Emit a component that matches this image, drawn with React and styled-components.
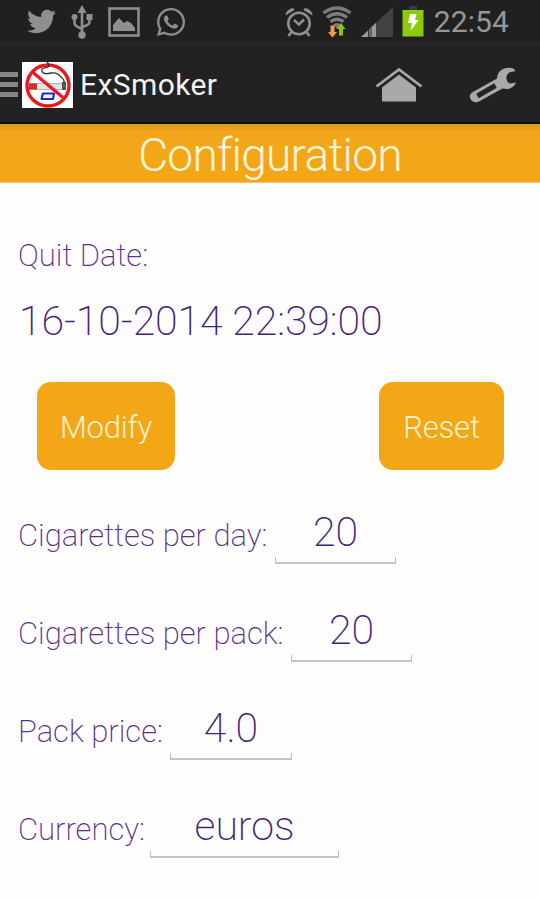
import React, { useState } from "react";
import styled, { createGlobalStyle } from "styled-components";
import { FaTwitter, FaWhatsapp } from "react-icons/fa";

const GlobalStyle = createGlobalStyle`
  * {
    box-sizing: border-box;
  }
  body {
    margin: 0;
    background: #fdfdfd;
    font-family: Roboto, "Liberation Sans", sans-serif;
  }
`;

const Container = styled.div`
  width: 540px;
  height: 900px;
  overflow: hidden;
  display: flex;
  flex-direction: column;
  background: #fdfdfd;
`;

const StatusBar = styled.div`
  height: 44px;
  flex: none;
  display: flex;
  justify-content: space-between;
  align-items: center;
  padding: 0 31px 0 27px;
  background: #202020;
  border-bottom: 1px solid #2b2d2d;
  color: #8f8f8f;
`;

const StatusGroup = styled.div`
  display: flex;
  align-items: center;
  gap: ${(props) => props.$gap}px;
  svg {
    display: block;
    flex: none;
  }
`;

const Clock = styled.span`
  font-size: 30px;
  line-height: 43px;
  letter-spacing: 0.1px;
  margin-left: 1px;
  color: #979797;
`;

const ActionBar = styled.header`
  height: 80px;
  flex: none;
  display: flex;
  align-items: center;
  padding: 3px 23px 0 0;
  background: #222222;
  border-bottom: 2px solid #110b12;
  svg {
    display: block;
    flex: none;
  }
`;

const MenuButton = styled.button`
  width: 22px;
  height: 50px;
  padding: 0;
  border: none;
  background: none;
  display: flex;
  flex-direction: column;
  justify-content: center;
  gap: 5px;
`;

const MenuLine = styled.span`
  width: 18px;
  height: 5px;
  background: #868686;
`;

const AppName = styled.h1`
  flex: 1;
  margin: 0 0 0 7px;
  font-size: 30px;
  line-height: 40px;
  font-weight: 400;
  letter-spacing: 0.4px;
  color: #f3f3f3;
`;

const Actions = styled.div`
  display: flex;
  align-items: center;
  gap: 46px;
`;

const Title = styled.h2`
  height: 59px;
  flex: none;
  margin: 0;
  padding-top: 3px;
  text-align: center;
  font-size: 46px;
  line-height: 56px;
  font-weight: 300;
  letter-spacing: -0.7px;
  color: #fff6dc;
  background: linear-gradient(#dc9a1c, #f2a61a 8px, #f3a716);
  border-bottom: 1px solid #f6c468;
`;

const Form = styled.form`
  display: flex;
  flex-direction: column;
  padding: 53px 18px 0;
`;

const Label = styled.label`
  font-size: 31px;
  line-height: 40px;
  font-weight: 200;
  color: #5a2f8a;
  white-space: nowrap;
`;

const QuitDate = styled.div`
  margin-top: 20px;
  padding-left: 1px;
  font-size: 41px;
  line-height: 50px;
  font-weight: 200;
  letter-spacing: -0.1px;
  color: #461f7a;
  white-space: nowrap;
`;

const Buttons = styled.div`
  display: flex;
  justify-content: space-between;
  margin-top: 36px;
  padding: 0 18px 0 19px;
`;

const Button = styled.button`
  width: ${(props) => props.$width}px;
  height: 88px;
  padding: 3px 0 0;
  border: none;
  border-radius: 14px;
  background: #f3a716;
  color: #fff0d2;
  font-family: inherit;
  font-size: 31px;
  font-weight: 300;
  letter-spacing: -0.2px;
`;

const Fields = styled.div`
  display: flex;
  flex-direction: column;
  gap: 38px;
  margin-top: 34px;
`;

const Row = styled.div`
  display: flex;
  height: 60px;
`;

const FieldLabel = styled(Label)`
  width: ${(props) => props.$width}px;
  padding-top: 12px;
`;

const InputWrap = styled.div`
  width: ${(props) => props.$width}px;
  height: 60px;
  background:
    linear-gradient(#bcbcbc, #bcbcbc) left bottom / 1px 7px no-repeat,
    linear-gradient(#bcbcbc, #bcbcbc) right bottom / 1px 7px no-repeat,
    linear-gradient(#c4c4c4, #c4c4c4) left bottom / 100% 2px no-repeat;
`;

const Input = styled.input`
  width: 100%;
  height: 56px;
  padding: 0;
  border: none;
  outline: none;
  background: none;
  text-align: center;
  font-family: inherit;
  font-size: 41px;
  font-weight: 200;
  color: #461f7a;
`;

const UsbIcon = () => (
  <svg width="22" height="34" viewBox="0 0 22 34" fill="none" stroke="currentColor" strokeWidth="2.6">
    <path d="M11 7v22M3.500 14v4q0 3 7.500 6M18.500 13v4q0 3-7.500 5" />
    <path d="M11 0l4.500 8h-9z" fill="currentColor" stroke="none" />
    <circle cx="11" cy="30" r="3.700" fill="currentColor" stroke="none" />
    <circle cx="3.500" cy="12" r="3" fill="currentColor" stroke="none" />
    <path d="M15.500 9h6v6h-6z" fill="currentColor" stroke="none" />
  </svg>
);

const PictureIcon = () => (
  <svg width="32" height="30" viewBox="0 0 32 30">
    <path d="M1.500 1.500h29v27h-29z" fill="none" stroke="currentColor" strokeWidth="2.500" />
    <path d="M5 24v-6l6-7 5 5 3-2 4 2 4 5v3z" fill="currentColor" />
  </svg>
);

const AlarmIcon = () => (
  <svg width="28" height="30" viewBox="0 0 28 30" fill="none" stroke="currentColor" strokeWidth="2.600">
    <circle cx="14" cy="16.500" r="10.700" />
    <path d="M9 13l5 4.500 5-5M6.500 25l-3 4M21.500 25l3 4" />
    <path d="M0.500 8.500Q1 2 8.500 1l1 2zM27.500 8.500Q27 2 19.500 1l-1 2z" fill="currentColor" stroke="none" />
  </svg>
);

const WifiIcon = () => (
  <svg width="30" height="32" viewBox="0 0 30 32" fill="none" stroke="#7c7c7c" strokeWidth="3.400">
    <path d="M1.500 7q13.500-10 27 0M5 11.500q10-7.500 20 0M8.500 15.700q6.500-5 13 0" />
    <path d="M11 18.500q4-3 8 0l-4 4z" fill="#7c7c7c" stroke="none" />
    <path d="M8.500 19.500h4v6.500h2.500l-4.500 5.500-4.500-5.500h2.500z" fill="#f99c3f" stroke="none" />
    <path d="M17 29.500h4v-6.500h2.500l-4.500-6-4.500 6h2.500z" fill="#86c512" stroke="none" />
  </svg>
);

const SignalIcon = () => (
  <svg width="32" height="30" viewBox="0 0 32 30">
    <path d="M0 30L32 0v30z" fill="#424242" />
    <path d="M0 30l7-6.500v6.500zM8.500 30v-8l2-2v10zM10.500 30v-10l4.500-4.200v14.200z" fill="#999" />
    <path d="M7.500 30v-7M10 30v-9" stroke="#333" strokeWidth="1" />
  </svg>
);

const BatteryIcon = () => (
  <svg width="22" height="31" viewBox="0 0 22 31">
    <path d="M7 0h8v4h-8z" fill="#3a3a3a" />
    <path d="M0.500 4h21v26.500h-21z" fill="#8bcb0c" />
    <path d="M8 8h6.500l-1.500 6h3.500l-8 11 1.500-8H6z" fill="#fff" />
  </svg>
);

const LogoIcon = () => (
  <svg width="51" height="46" viewBox="0 0 51 46" fill="none">
    <path d="M0 0h51v46H0z" fill="#fff" />
    <path d="M7 21.500h36v6H7z" fill="#e4e4e4" stroke="#999" strokeWidth="0.700" />
    <path d="M7 21.500h8v6H7z" fill="#d22f25" />
    <path d="M40 20h4v8h-4z" fill="#555" />
    <path d="M21 31.500h11l-1 5.500H19.500z" stroke="#1928d8" strokeWidth="2.200" strokeLinejoin="round" />
    <ellipse cx="26" cy="23.500" rx="21" ry="20.500" stroke="#ef151c" strokeWidth="3.400" />
    <path d="M11 10.500l30 25" stroke="#ef151c" strokeWidth="3.200" />
    <path d="M25 0q3 3 1 5-7 1-6 4 1 4 9 2 6-1 9 3 5 4 4 7" stroke="#333" strokeWidth="1.300" />
  </svg>
);

const HomeIcon = () => (
  <svg width="48" height="36" viewBox="0 0 48 36">
    <path d="M1.500 19.500L24 2.500 46.500 19.500" fill="none" stroke="#a9a9a9" strokeWidth="2.800" />
    <path d="M7 20.500L24 7.500l17 13v14H7z" fill="#a9a9a9" />
  </svg>
);

const WrenchIcon = () => (
  <svg width="48" height="36" viewBox="0 0 48 36" fill="none">
    <path
      d="M28 11.500Q28.500 5 33 2.500 38 -.500 44.500 1.500L46.500 4 40 5.500Q37 8 37.500 12 38 15.500 41 16.500L47 15.500Q44.500 21.500 38 22L33.500 21.500 9 35Q4 36 1.500 32 -.500 28 3 25.500z"
      fill="#a9a9a9"
    />
    <path d="M8.500 29L26.500 18.500" stroke="#242424" strokeWidth="5" />
  </svg>
);

const initialFields = [
  { name: "perDay", label: "Cigarettes per day:", value: "20", labelWidth: 257, inputWidth: 121 },
  { name: "perPack", label: "Cigarettes per pack:", value: "20", labelWidth: 273, inputWidth: 121 },
  { name: "price", label: "Pack price:", value: "4.0", labelWidth: 152, inputWidth: 122 },
  { name: "currency", label: "Currency:", value: "euros", labelWidth: 132, inputWidth: 189 },
];

const App = () => {
  const [fields, setFields] = useState(initialFields);

  const handleChange = (name, value) => {
    setFields(fields.map((f) => (f.name === name ? { ...f, value } : f)));
  };

  return (
    <Container>
      <GlobalStyle />
      <StatusBar>
        <StatusGroup $gap={15}>
          <FaTwitter size={29} />
          <UsbIcon />
          <PictureIcon />
          <FaWhatsapp size={32} />
        </StatusGroup>
        <StatusGroup $gap={9}>
          <AlarmIcon />
          <WifiIcon />
          <SignalIcon />
          <BatteryIcon />
          <Clock>22:54</Clock>
        </StatusGroup>
      </StatusBar>
      <ActionBar>
        <MenuButton aria-label="Menu">
          <MenuLine />
          <MenuLine />
          <MenuLine />
        </MenuButton>
        <LogoIcon />
        <AppName>ExSmoker</AppName>
        <Actions>
          <HomeIcon />
          <WrenchIcon />
        </Actions>
      </ActionBar>
      <Title>Configuration</Title>
      <Form>
        <Label as="div">Quit Date:</Label>
        <QuitDate>16-10-2014 22:39:00</QuitDate>
        <Buttons>
          <Button type="button" $width={138}>Modify</Button>
          <Button type="button" $width={125}>Reset</Button>
        </Buttons>
        <Fields>
          {fields.map((f) => (
            <Row key={f.name}>
              <FieldLabel htmlFor={f.name} $width={f.labelWidth}>{f.label}</FieldLabel>
              <InputWrap $width={f.inputWidth}>
                <Input
                  id={f.name}
                  value={f.value}
                  onChange={(e) => handleChange(f.name, e.target.value)}
                />
              </InputWrap>
            </Row>
          ))}
        </Fields>
      </Form>
    </Container>
  );
};

export default App;
